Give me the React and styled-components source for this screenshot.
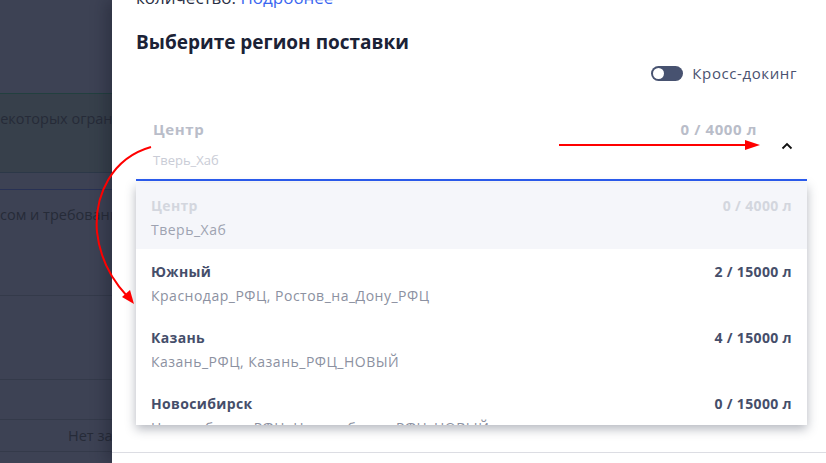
import styled, { createGlobalStyle } from "styled-components";

const GlobalStyle = createGlobalStyle`
  html, body {
    margin: 0;
    padding: 0;
    width: 826px;
    height: 463px;
    overflow: hidden;
    font-family: "Open Sans", "Noto Sans", sans-serif;
  }
`;

const Screen = styled.div`
  position: relative;
  width: 826px;
  height: 463px;
  overflow: hidden;
  background: #3d4254;
`;

/* dimmed page behind the drawer */
const BackPage = styled.div`
  display: flex;
  flex-direction: column;
  width: 112px;
  height: 100%;
  overflow: hidden;
`;

const BackRow = styled.div`
  height: ${(p) => p.h}px;
  flex-shrink: 0;
  box-sizing: border-box;
  background: ${(p) => p.bg || "transparent"};
  border-bottom: 1px solid ${(p) => p.line || "#343a4a"};
  padding-left: ${(p) => p.indent || 0}px;
  padding-top: ${(p) => p.top || 0}px;
  text-indent: ${(p) => p.shift || 0}px;
  white-space: nowrap;
  overflow: hidden;
  font-size: 14.5px;
  color: #262b38;
`;

const Drawer = styled.aside`
  position: absolute;
  top: 0;
  left: 112px;
  right: 0;
  bottom: 0;
  background: #ffffff;
  box-shadow: -6px 0 14px rgba(20, 24, 36, 0.35);
  display: flex;
  flex-direction: column;
`;

const DrawerBody = styled.div`
  flex: 1;
  padding: 0 19px 0 24px;
  overflow: hidden;
`;

const Intro = styled.p`
  margin: -14px 0 0;
  font-size: 17px;
  line-height: 23px;
  color: #2a3045;

  a {
    color: #3a66f0;
    text-decoration: none;
  }
`;

const Title = styled.h2`
  margin: 20px 0 0;
  font-size: 19px;
  line-height: 26px;
  font-weight: 700;
  color: #1b2236;
`;

const ToggleRow = styled.div`
  display: flex;
  justify-content: flex-end;
  align-items: center;
  gap: 9px;
  margin-top: 8px;
  padding-right: 10px;
`;

const Switch = styled.span`
  position: relative;
  width: 32px;
  height: 15px;
  border-radius: 8px;
  background: #475270;

  &::after {
    content: "";
    position: absolute;
    left: 2px;
    top: 2px;
    width: 11px;
    height: 11px;
    border-radius: 50%;
    background: #ffffff;
  }
`;

const ToggleLabel = styled.span`
  font-size: 15px;
  color: #4a5270;
  letter-spacing: 0.6px;
`;

const SelectWrap = styled.div`
  position: relative;
  margin-top: 25px;
`;

const Field = styled.div`
  display: flex;
  align-items: center;
  height: 73px;
  box-sizing: border-box;
  padding: 7px 14px 6px 17px;
  border-bottom: 2px solid #2b5cf0;
`;

const FieldText = styled.div`
  flex: 1;
  display: flex;
  flex-direction: column;
  gap: 12px;
`;

const FieldTop = styled.div`
  display: flex;
  justify-content: space-between;
  padding-right: 24px;
  font-size: 15px;
  font-weight: 700;
  letter-spacing: 0.6px;
  color: #b9bdc9;
`;

const FieldSub = styled.div`
  font-size: 13px;
  color: #c9ccd6;
`;

const Chevron = styled.svg`
  margin-top: 4px;
  flex-shrink: 0;
`;

const Menu = styled.ul`
  position: absolute;
  top: 75px;
  left: 0;
  right: 0;
  height: 242px;
  margin: 0;
  padding: 0;
  list-style: none;
  overflow: hidden;
  background: #ffffff;
  box-shadow: 0 4px 10px rgba(40, 48, 70, 0.35);
  z-index: 2;
`;

const Option = styled.li`
  height: 66px;
  box-sizing: border-box;
  padding: 13px 15px 0;
  background: ${(p) => (p.disabled ? "#f5f6fa" : "#ffffff")};
  display: flex;
  flex-direction: column;
  gap: 5px;
`;

const OptionHead = styled.div`
  display: flex;
  justify-content: space-between;
  font-size: 14px;
  font-weight: 700;
  letter-spacing: 0.35px;
  color: ${(p) => (p.disabled ? "#d3d6de" : "#454e6a")};
`;

const OptionSub = styled.div`
  font-size: 14px;
  letter-spacing: 0.5px;
  color: ${(p) => (p.disabled ? "#9ea3b1" : "#8c91a1")};
  white-space: nowrap;
`;

const Footer = styled.div`
  height: 10px;
  border-top: 1px solid #dcdde3;
`;

const Annotations = styled.svg`
  position: absolute;
  inset: 0;
  pointer-events: none;
  z-index: 5;
`;

const options = [
  { name: "Центр", hubs: "Тверь_Хаб", count: "0 / 4000 л", disabled: true },
  { name: "Южный", hubs: "Краснодар_РФЦ, Ростов_на_Дону_РФЦ", count: "2 / 15000 л" },
  { name: "Казань", hubs: "Казань_РФЦ, Казань_РФЦ_НОВЫЙ", count: "4 / 15000 л" },
  { name: "Новосибирск", hubs: "Новосибирск_РФЦ, Новосибирск_РФЦ_НОВЫЙ", count: "0 / 15000 л" },
];

export default function App() {
  return (
    <Screen>
      <GlobalStyle />
      <BackPage>
        <BackRow h={94} line="#22403f" />
        <BackRow h={79} bg="#37404b" line="#2c3848" top={15} shift={-9}>
          некоторых ограничений
        </BackRow>
        <BackRow h={17} line="#283154" />
        <BackRow h={106} top={15}>
          сом и требования
        </BackRow>
        <BackRow h={84} />
        <BackRow h={40} />
        <BackRow h={32} indent={68} top={6}>
          Нет заявок
        </BackRow>
      </BackPage>

      <Drawer>
        <DrawerBody>
          <Intro>
            количество: <a href="#">Подробнее</a>
          </Intro>
          <Title>Выберите регион поставки</Title>
          <ToggleRow>
            <Switch />
            <ToggleLabel>Кросс-докинг</ToggleLabel>
          </ToggleRow>
          <SelectWrap>
            <Field>
              <FieldText>
                <FieldTop>
                  <span>Центр</span>
                  <span>0 / 4000 л</span>
                </FieldTop>
                <FieldSub>Тверь_Хаб</FieldSub>
              </FieldText>
              <Chevron width="12" height="8" viewBox="0 0 12 8">
                <path d="M1.5 6.5 L6 2 L10.5 6.5" fill="none" stroke="#111" strokeWidth="1.8" />
              </Chevron>
            </Field>
            <Menu>
              {options.map((o) => (
                <Option key={o.name} disabled={o.disabled}>
                  <OptionHead disabled={o.disabled}>
                    <span>{o.name}</span>
                    <span>{o.count}</span>
                  </OptionHead>
                  <OptionSub disabled={o.disabled}>{o.hubs}</OptionSub>
                </Option>
              ))}
            </Menu>
          </SelectWrap>
        </DrawerBody>
        <Footer />
      </Drawer>

      <Annotations width="826" height="463" viewBox="0 0 826 463">
        <line x1="559" y1="145" x2="748" y2="145" stroke="#f00" strokeWidth="2" />
        <polygon points="760,145 745,140 745,150" fill="#f00" />
        <path
          d="M151 147 C 112 158, 94 195, 97 232 C 100 260, 114 282, 127 296"
          fill="none"
          stroke="#f00"
          strokeWidth="2"
        />
        <polygon points="134,304 122,297 130,290" fill="#f00" />
      </Annotations>
    </Screen>
  );
}
